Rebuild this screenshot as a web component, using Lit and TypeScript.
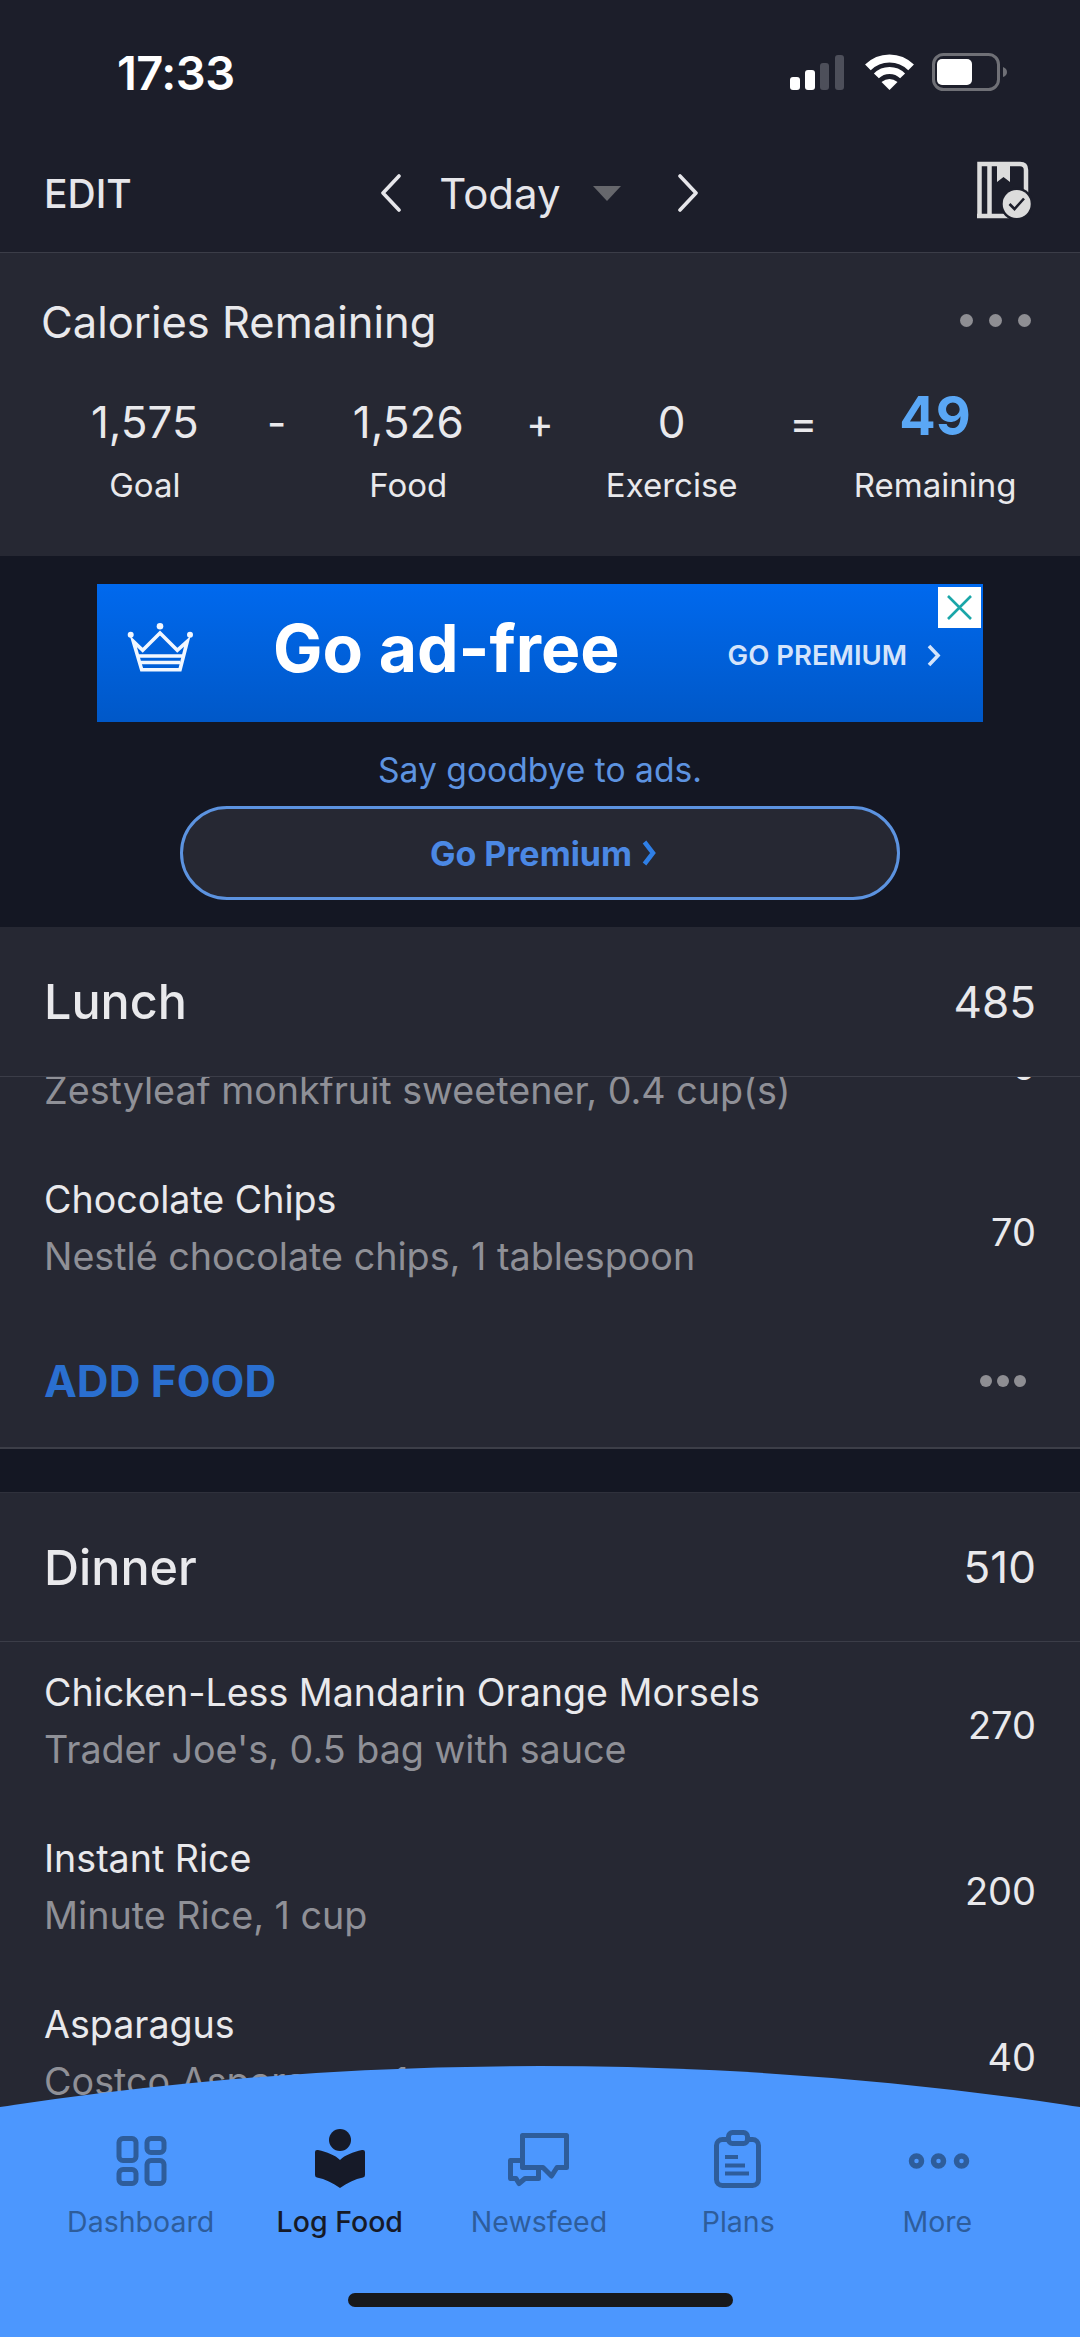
import { LitElement, css, html, svg } from 'lit'
import { customElement } from 'lit/decorators.js'

type Food = { name: string; detail: string; kcal: string }

// the first lunch row is scrolled under the sticky header, its name is out of view
const lunchFoods: Food[] = [
  { name: '', detail: 'Zestyleaf monkfruit sweetener, 0.4 cup(s)', kcal: '0' },
  { name: 'Chocolate Chips', detail: 'Nestlé chocolate chips, 1 tablespoon', kcal: '70' },
]

const dinnerFoods: Food[] = [
  { name: 'Chicken-Less Mandarin Orange Morsels', detail: "Trader Joe's, 0.5 bag with sauce", kcal: '270' },
  { name: 'Instant Rice', detail: 'Minute Rice, 1 cup', kcal: '200' },
  { name: 'Asparagus', detail: 'Costco Asparagus, 1 cup', kcal: '40' },
]

const tabIcons = {
  dashboard: svg`
    <g fill="none" stroke="currentColor" stroke-width="5">
      <rect x="13" y="10.5" width="17" height="22" rx="4" />
      <rect x="41" y="10.5" width="17" height="14" rx="4" />
      <rect x="13" y="41.5" width="17" height="14" rx="4" />
      <rect x="41" y="32.5" width="17" height="23" rx="4" />
    </g>`,
  logFood: svg`
    <circle cx="35" cy="12" r="11" fill="currentColor" />
    <path fill="currentColor" d="M10 24 Q10 21.5 13 22 C22 24 30 27 35 32 C40 27 48 24 57 22 Q60 21.5 60 24 L60 47 Q60 49 58 49.5 C50 51 42 55 35 60 C28 55 20 51 12 49.5 Q10 49 10 47 Z" />`,
  newsfeed: svg`
    <g fill="none" stroke="currentColor" stroke-width="5" stroke-linejoin="round">
      <path d="M18.5 7.5 H62.5 V39.5 H53 L47.5 48 L39 39.5 H18.5 Z" />
      <path d="M16 32.5 H6.5 V50.5 H12 L15 55.5 L21 50.5 H34.5 V42" />
    </g>`,
  plans: svg`
    <g fill="none" stroke="currentColor">
      <rect x="13.5" y="11.5" width="42" height="46" rx="6" stroke-width="5" />
      <rect x="25.5" y="4.5" width="19" height="11" rx="4" stroke-width="5" fill="#4c97fe" />
      <path d="M22 29 H35 M22 37.5 H42 M22 45.5 H46" stroke-width="4" />
    </g>`,
  more: svg`
    <g fill="none" stroke="currentColor" stroke-width="5.5">
      <circle cx="14.5" cy="33" r="5" />
      <circle cx="36.5" cy="33" r="5" />
      <circle cx="59.5" cy="33" r="5" />
    </g>`,
}

const tabs = [
  { label: 'Dashboard', icon: tabIcons.dashboard, active: false },
  { label: 'Log Food', icon: tabIcons.logFood, active: true },
  { label: 'Newsfeed', icon: tabIcons.newsfeed, active: false },
  { label: 'Plans', icon: tabIcons.plans, active: false },
  { label: 'More', icon: tabIcons.more, active: false },
]

@customElement('app-root')
export class AppRoot extends LitElement {
  renderRow(food: Food) {
    return html`
      <div class="food">
        <div class="food-text">
          <div class="food-name">${food.name}</div>
          <div class="food-detail">${food.detail}</div>
        </div>
        <div class="food-kcal">${food.kcal}</div>
      </div>
    `
  }

  renderStatus() {
    return html`
      <div class="status">
        <span class="time">17:33</span>
        <div class="status-icons">
          <svg width="54" height="35" viewBox="0 0 54 35">
            <rect x="0" y="22" width="10" height="13" rx="3" fill="#fff" />
            <rect x="15" y="15" width="10" height="20" rx="3" fill="#fff" />
            <rect x="30" y="8" width="9" height="27" rx="3" fill="#4d4f5a" />
            <rect x="45" y="0" width="9" height="35" rx="3" fill="#4d4f5a" />
          </svg>
          <svg class="wifi" width="56" height="42" viewBox="0 0 56 42">
            <g fill="none" stroke="#fff">
              <path stroke-width="8" d="M5.9 16.4 A30.5 30.5 0 0 1 49.1 16.4" />
              <path stroke-width="7" d="M14.4 24.9 A18.5 18.5 0 0 1 40.6 24.9" />
            </g>
            <path fill="#fff" d="M27.5 39 L19.5 31 Q27.5 25 35.5 31 Z" />
          </svg>
          <svg width="75" height="38" viewBox="0 0 75 38">
            <rect x="1.5" y="1.5" width="65" height="35" rx="10" fill="none" stroke="#6f7076" stroke-width="3" />
            <rect x="5" y="6" width="35" height="26" rx="5" fill="#fff" />
            <path d="M71 14 Q75 15.5 75 19 Q75 22.5 71 24 Z" fill="#6f7076" />
          </svg>
        </div>
      </div>
    `
  }

  renderNav() {
    return html`
      <div class="nav">
        <span class="edit">EDIT</span>
        <div class="date">
          <svg width="23" height="38" viewBox="0 0 23 38">
            <path d="M20 2 L4 19 L20 36" fill="none" stroke="#e6e6ea" stroke-width="3.6" stroke-linecap="round" stroke-linejoin="round" />
          </svg>
          <span class="today">Today</span>
          <span class="caret"></span>
          <svg width="23" height="38" viewBox="0 0 23 38">
            <path d="M3 2 L19 19 L3 36" fill="none" stroke="#e6e6ea" stroke-width="3.6" stroke-linecap="round" stroke-linejoin="round" />
          </svg>
        </div>
        <svg class="diary" width="60" height="60" viewBox="0 0 60 60">
          <g fill="none" stroke="#dcdcdc" stroke-width="4.5">
            <path d="M4.5 58 V4 H45 Q51 4 51 10 V42" />
            <path d="M2 56 H34 M14.5 4 V56" />
          </g>
          <path fill="#dcdcdc" d="M22 4 H35 V22 L28.5 17 L22 22 Z" />
          <circle cx="41.7" cy="44" r="16.5" fill="#1c1e2a" />
          <circle cx="41.7" cy="44" r="14" fill="#dcdcdc" />
          <path d="M34.5 44 L39.5 49 L49 38.5" fill="none" stroke="#1c1e2a" stroke-width="2.6" />
        </svg>
      </div>
    `
  }

  renderCalories() {
    return html`
      <section class="calories">
        <div class="calories-head">
          <span class="calories-title">Calories Remaining</span>
          <span class="dots"><i></i><i></i><i></i></span>
        </div>
        <div class="stats">
          <div class="stat"><div class="value">1,575</div><div class="label">Goal</div></div>
          <div class="operator">-</div>
          <div class="stat"><div class="value">1,526</div><div class="label">Food</div></div>
          <div class="operator">+</div>
          <div class="stat"><div class="value">0</div><div class="label">Exercise</div></div>
          <div class="operator">=</div>
          <div class="stat"><div class="value left">49</div><div class="label">Remaining</div></div>
        </div>
      </section>
    `
  }

  renderAd() {
    return html`
      <section class="ad">
        <div class="banner">
          <svg class="crown" width="70" height="50" viewBox="0 0 70 50">
            <g fill="#f2f7ff">
              <circle cx="5.7" cy="11.7" r="3" />
              <circle cx="35" cy="3.3" r="3.3" />
              <circle cx="65" cy="11.7" r="3" />
            </g>
            <g fill="none" stroke="#f2f7ff" stroke-width="3.6">
              <path d="M8.3 18.3 L17.7 27.3 L35 10 L52.3 27.3 L62.3 18.3 L55 46.7 H16.7 Z" />
              <path d="M14 33 H57 M16 39.5 H55" />
            </g>
          </svg>
          <span class="ad-title">Go ad-free</span>
          <span class="ad-cta">GO PREMIUM</span>
          <svg class="ad-chevron" width="14" height="23" viewBox="0 0 14 23">
            <path d="M2 2 L11 11.5 L2 21" fill="none" stroke="#d4e4fb" stroke-width="3.6" />
          </svg>
          <div class="close">
            <svg width="25" height="25" viewBox="0 0 25 25">
              <path d="M1 1 L24 24 M24 1 L1 24" stroke="#1aa6a8" stroke-width="2.6" />
            </svg>
          </div>
        </div>
        <div class="ad-note">Say goodbye to ads.</div>
        <div class="premium">
          <span>Go Premium</span>
          <svg width="14" height="26" viewBox="0 0 14 26">
            <path d="M2.5 2 L11 13 L2.5 24" fill="none" stroke="#2f7fe6" stroke-width="4.5" />
          </svg>
        </div>
      </section>
    `
  }

  renderLunch() {
    return html`
      <section class="meal">
        <div class="meal-head"><span class="meal-name">Lunch</span><span class="meal-kcal">485</span></div>
        <div class="meal-list">
          <div class="scrolled">${lunchFoods.map((food) => this.renderRow(food))}</div>
        </div>
        <div class="add-row">
          <span class="add-food">ADD FOOD</span>
          <span class="dots small"><i></i><i></i><i></i></span>
        </div>
      </section>
    `
  }

  renderDinner() {
    return html`
      <section class="meal dinner">
        <div class="meal-head"><span class="meal-name">Dinner</span><span class="meal-kcal">510</span></div>
        ${dinnerFoods.map((food) => this.renderRow(food))}
      </section>
    `
  }

  render() {
    return html`
      <header class="top">${this.renderStatus()}${this.renderNav()}</header>
      ${this.renderCalories()}${this.renderAd()}${this.renderLunch()}${this.renderDinner()}
      <nav class="tabbar">
        <div class="tabs">
          ${tabs.map(
            (tab) => html`
              <div class="tab ${tab.active ? 'active' : ''}">
                <svg width="70" height="64" viewBox="0 0 70 64">${tab.icon}</svg>
                <span>${tab.label}</span>
              </div>
            `,
          )}
        </div>
        <div class="home-bar"></div>
      </nav>
    `
  }

  static styles = css`
    :host {
      background: #141723;
      color: #e9e9ec;
      display: block;
      font-family: Inter, 'Liberation Sans', sans-serif;
      height: 2337px;
      overflow: hidden;
      position: relative;
      width: 1080px;
    }
    svg {
      display: block;
      flex: none;
    }
    .top {
      background: #1c1e2a;
      border-bottom: 1px solid #3b3d48;
      height: 252px;
    }
    .status {
      align-items: center;
      box-sizing: border-box;
      display: flex;
      height: 134px;
      justify-content: space-between;
      padding: 10px 73px 0 117px;
    }
    .time {
      color: #fff;
      font-size: 47px;
      font-weight: 600;
      letter-spacing: -0.5px;
    }
    .status-icons {
      align-items: center;
      display: flex;
      gap: 16px;
    }
    .wifi {
      margin: 0 -2px 0 2px;
    }
    .nav {
      align-items: center;
      display: grid;
      grid-template-columns: 1fr auto 1fr;
      height: 118px;
      padding: 0 45px 0 44px;
    }
    .edit {
      color: #e6e6ea;
      font-size: 39px;
      font-weight: 500;
    }
    .date {
      align-items: center;
      display: flex;
    }
    .today {
      color: #e6e6ea;
      font-size: 42px;
      font-weight: 400;
      margin: 0 32px 0 37px;
    }
    .caret {
      border-left: 14px solid transparent;
      border-right: 14px solid transparent;
      border-top: 15px solid #66676c;
      margin-right: 56px;
    }
    .diary {
      justify-self: end;
      margin-bottom: 6px;
    }
    .calories {
      background: #262833;
      box-sizing: border-box;
      height: 303px;
      padding-top: 44px;
    }
    .calories-head {
      align-items: center;
      display: flex;
      height: 50px;
      justify-content: space-between;
      padding: 0 49px 0 41px;
    }
    .calories-title {
      font-size: 43.5px;
    }
    .dots {
      display: flex;
      gap: 16px;
      margin-bottom: 4px;
    }
    .dots i {
      background: #8e8e93;
      border-radius: 50%;
      height: 13px;
      width: 13px;
    }
    .dots.small {
      gap: 5px;
      margin: 0 10px 0 0;
    }
    .dots.small i {
      height: 12px;
      width: 12px;
    }
    .stats {
      display: grid;
      grid-template-columns: repeat(7, minmax(0, 1fr));
      margin-top: 45px;
      padding: 0 79px;
    }
    .stat {
      align-items: center;
      display: flex;
      flex-direction: column;
      white-space: nowrap;
    }
    .value {
      font-size: 44px;
      height: 60px;
      line-height: 60px;
    }
    .value.left {
      color: #5aa7f5;
      font-size: 54px;
      font-weight: 700;
      height: 48px;
      line-height: 48px;
      padding-bottom: 12px;
    }
    .label {
      font-size: 33px;
      line-height: 40px;
      margin-top: 13px;
    }
    .operator {
      font-size: 42px;
      line-height: 62px;
      text-align: center;
    }
    .ad {
      align-items: center;
      background: #141723;
      box-sizing: border-box;
      display: flex;
      flex-direction: column;
      height: 371px;
      padding-top: 28px;
    }
    .banner {
      align-items: center;
      background: linear-gradient(#0069ee, #0058c8);
      box-sizing: border-box;
      display: flex;
      height: 138px;
      padding: 0 0 10px 28px;
      position: relative;
      width: 886px;
    }
    .ad-title {
      color: #fff;
      font-size: 66px;
      font-weight: 700;
      margin-left: 78px;
    }
    .ad-cta {
      color: #d4e4fb;
      font-size: 27.5px;
      font-weight: 600;
      margin: 14px 0 0 108px;
    }
    .ad-chevron {
      margin: 14px 0 0 20px;
    }
    .close {
      align-items: center;
      background: #fff;
      display: flex;
      height: 41px;
      justify-content: center;
      position: absolute;
      right: 2px;
      top: 3px;
      width: 43px;
    }
    .ad-note {
      color: #5d93e0;
      font-size: 33.6px;
      line-height: 40px;
      margin-top: 28px;
    }
    .premium {
      align-items: center;
      background: #262833;
      border: 3px solid #5c93e0;
      border-radius: 47px;
      box-sizing: border-box;
      color: #4b88e4;
      display: flex;
      font-size: 34px;
      font-weight: 700;
      gap: 10px;
      height: 94px;
      justify-content: center;
      margin-top: 16px;
      padding-left: 6px;
      width: 720px;
    }
    .meal {
      background: #262833;
    }
    .meal-head {
      align-items: center;
      border-bottom: 1px solid #3b3d48;
      box-sizing: content-box;
      display: flex;
      height: 149px;
      justify-content: space-between;
      padding: 0 44px;
    }
    .dinner .meal-head {
      height: 148px;
    }
    .meal-name {
      font-size: 48.5px;
      font-weight: 500;
    }
    .meal-kcal {
      font-size: 44px;
    }
    .meal-list {
      height: 238px;
      overflow: hidden;
    }
    .scrolled {
      margin-top: -94px;
    }
    .food {
      align-items: center;
      box-sizing: border-box;
      display: flex;
      height: 166px;
      justify-content: space-between;
      padding: 0 44px 8px;
    }
    .food-name {
      font-size: 37.6px;
      line-height: 56px;
      min-height: 56px;
    }
    .food-detail {
      color: #8f9097;
      font-size: 37.7px;
      line-height: 56px;
    }
    .food-kcal {
      font-size: 38px;
      padding-top: 8px;
    }
    .add-row {
      align-items: center;
      border-bottom: 2px solid #3c3e48;
      display: flex;
      height: 132px;
      justify-content: space-between;
      padding: 0 44px;
    }
    .add-food {
      color: #2a6fd0;
      font-size: 44px;
      font-weight: 700;
    }
    .dinner {
      border-top: 1px solid #2f313c;
      margin-top: 43px;
    }
    .tabbar {
      background: #4c97fe;
      bottom: 0;
      clip-path: circle(3577px at 50% 3577px);
      height: 271px;
      left: 0;
      position: absolute;
      width: 1080px;
    }
    .tabs {
      display: grid;
      grid-template-columns: repeat(5, 1fr);
      padding: 62px 43px 0 41px;
    }
    .tab {
      align-items: center;
      color: #2e5d9b;
      display: flex;
      flex-direction: column;
      font-size: 28.5px;
      white-space: nowrap;
    }
    .tab span {
      line-height: 36px;
      margin-top: 12px;
    }
    .tab.active {
      color: #161a28;
      font-weight: 500;
    }
    .home-bar {
      background: #18191b;
      border-radius: 7px;
      height: 14px;
      margin: 53px auto 0;
      width: 385px;
    }
  `
}

declare global {
  interface HTMLElementTagNameMap {
    'app-root': AppRoot
  }
}
